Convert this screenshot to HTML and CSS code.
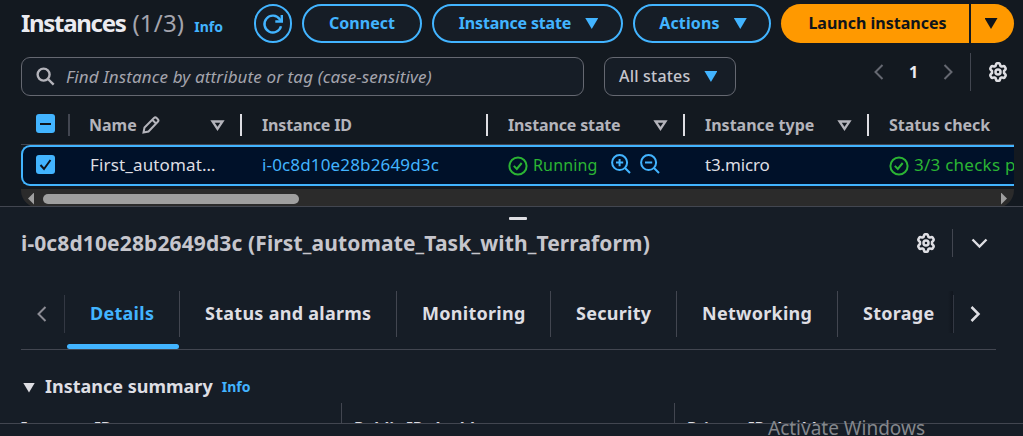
FILE: index.html
```html
<!DOCTYPE html>
<html lang="en">
<head>
<meta charset="utf-8">
<title>Instances</title>
<link rel="stylesheet" href="styles.css">
</head>
<body>
<svg class="defs" aria-hidden="true">
  <symbol id="gear" viewBox="0 0 20 20"><path d="M8 2.400Q8.300 1.200 9.300 1.200h1.400Q11.700 1.200 12 2.400L12.400 3.900L13.600 4.600L15.100 4.200Q16.200 3.900 16.800 4.800L17.500 6Q18 7 17.200 7.800L16 9V11L17.200 12.200Q18 13 17.500 14L16.800 15.200Q16.200 16.100 15.100 15.800L13.600 15.400L12.400 16.100L12 17.600Q11.700 18.800 10.700 18.800H9.300Q8.300 18.800 8 17.600L7.600 16.100L6.400 15.400L4.900 15.800Q3.800 16.100 3.200 15.200L2.500 14Q2 13 2.800 12.200L4 11V9L2.800 7.800Q2 7 2.500 6L3.200 4.800Q3.800 3.900 4.900 4.200L6.400 4.600L7.600 3.900Z"/><circle cx="10" cy="10" r="2.500"/></symbol>
  <symbol id="check" viewBox="0 0 20 20"><circle cx="10" cy="10" r="8.600"/><path d="M5.800 9.900l3 3.100 4.900-6"/></symbol>
</svg>
<main class="list">
  <header class="bar">
    <h1 class="title"><span class="word">Instances</span><span class="count">(1/3)</span></h1>
    <a class="info">Info</a>
    <div class="actions">
      <button class="btn round"><svg class="refresh" viewBox="0 0 20 20"><path d="M18 12.200A8.400 8.400 0 1 1 16.800 5.300L18.600 7"/><path d="M18.800 1v6.500h-6.500"/></svg></button>
      <button class="btn connect"><span>Connect</span></button>
      <button class="btn state"><span>Instance state</span><i class="tri"></i></button>
      <button class="btn act"><span>Actions</span><i class="tri"></i></button>
      <div class="split"><button class="launch"><span>Launch instances</span></button><button class="more"><i class="tri"></i></button></div>
    </div>
  </header>
  <div class="filters">
    <div class="search"><svg class="mag" viewBox="0 0 20 20"><circle cx="8" cy="8" r="6.300"/><path d="M12.600 12.600l6 6"/></svg><span>Find Instance by attribute or tag (case-sensitive)</span></div>
    <div class="select"><span>All states</span><i class="tri"></i></div>
    <div class="pager">
      <svg class="chev" viewBox="0 0 10 16"><path d="M8.500 1L1.500 8l7 7"/></svg>
      <b>1</b>
      <svg class="chev" viewBox="0 0 10 16"><path d="M1.500 1l7 7-7 7"/></svg>
    </div>
    <div class="prefs"><svg class="gear"><use href="#gear"/></svg></div>
  </div>
  <div class="table">
    <div class="row head">
      <div class="cell pick"><span class="box"><svg viewBox="0 0 19 19"><path d="M4 10h11"/></svg></span></div>
      <div class="cell"><span class="h-name">Name</span><svg class="pencil" viewBox="0 0 18 18"><path d="M1.500 16.500l1-5L12 2q1.300-1.200 2.600 0l1.200 1.200q1.300 1.300 0 2.600L6.500 15.500zM10.500 4l3.500 3.500"/></svg><svg class="sort" viewBox="0 0 13 11"><path d="M1.500 1.500h10l-5 7.500z"/></svg></div>
      <div class="cell"><span class="h-id">Instance ID</span></div>
      <div class="cell"><span class="h-state">Instance state</span><svg class="sort" viewBox="0 0 13 11"><path d="M1.500 1.500h10l-5 7.500z"/></svg></div>
      <div class="cell"><span class="h-type">Instance type</span><svg class="sort" viewBox="0 0 13 11"><path d="M1.500 1.500h10l-5 7.500z"/></svg></div>
      <div class="cell last"><span class="h-check">Status check</span></div>
    </div>
    <div class="row data">
      <div class="cell pick"><span class="box"><svg viewBox="0 0 19 19"><path d="M4.500 10l3.500 4 6.500-9"/></svg></span></div>
      <div class="cell"><span class="d-name">First_automat…</span></div>
      <div class="cell"><a class="d-id">i-0c8d10e28b2649d3c</a></div>
      <div class="cell ok"><svg class="check"><use href="#check"/></svg><span class="d-run">Running</span>
        <svg class="zoom" viewBox="0 0 20 20"><circle cx="8.600" cy="8.600" r="7.500"/><path d="M14 14l5 5M5 8.600h7.200M8.600 5v7.200"/></svg>
        <svg class="zoom out" viewBox="0 0 20 20"><circle cx="8.600" cy="8.600" r="7.500"/><path d="M14 14l5 5M5 8.600h7.200"/></svg>
      </div>
      <div class="cell"><span class="d-type">t3.micro</span></div>
      <div class="cell ok"><svg class="check"><use href="#check"/></svg><span class="d-check">3/3 checks passed</span></div>
    </div>
    <div class="scroll"><i class="left"></i><i class="thumb"></i><i class="right"></i></div>
  </div>
</main>
<section class="panel">
  <i class="grip"></i>
  <div class="panel-head">
    <h2 class="name">i-0c8d10e28b2649d3c (First_automate_Task_with_Terraform)</h2>
    <svg class="gear"><use href="#gear"/></svg>
    <div class="fold"><svg viewBox="0 0 17 11"><path d="M1.500 1.500l7 7 7-7"/></svg></div>
  </div>
  <nav class="tabs">
    <div class="prev"><svg class="chev" viewBox="0 0 10 16"><path d="M8.500 1L1.500 8l7 7"/></svg></div>
    <div class="tab t1 active"><span>Details</span></div>
    <div class="tab t2"><span>Status and alarms</span></div>
    <div class="tab t3"><span>Monitoring</span></div>
    <div class="tab t4"><span>Security</span></div>
    <div class="tab t5"><span>Networking</span></div>
    <div class="tab t6"><span>Storage</span></div>
    <div class="next"><svg class="chev" viewBox="0 0 10 16"><path d="M1.500 1l7 7-7 7"/></svg></div>
  </nav>
  <div class="summary"><i class="tri"></i><h3>Instance summary</h3><a class="info">Info</a></div>
  <div class="fields"><div><span>Instance ID</span></div><div><span>Public IPv4 address</span></div><div><span>Private IPv4 addresses</span></div></div>
  <div class="notice">Activate Windows</div>
</section>
</body>
</html>
```

FILE: styles.css
```css
* { box-sizing: border-box; }
body { margin: 0; width: 1023px; height: 436px; overflow: hidden; background: #131920; color: #c6c6cd; font: 16px/20px "Noto Sans", "Open Sans", sans-serif; }
h1, h2, h3 { margin: 0; }
span, a, h1, h2, h3 { white-space: nowrap; }
svg { display: block; flex: none; fill: none; stroke: currentColor; stroke-width: 2; overflow: visible; }
.defs { width: 0; height: 0; position: absolute; }
.list { height: 206px; padding: 4px 9px 0 21px; }
.bar { display: flex; height: 39px; align-items: center; }
.title { display: flex; gap: 7px; font-size: 24px; line-height: 30px; margin-top: -2px; color: #ebebf0; }
.word { letter-spacing: -1.3px; }
.count { font-weight: 400; color: #a4a4ad; letter-spacing: .2px; }
.info { color: #42b4ff; font-size: 14px; font-weight: 700; }
.bar .info { margin: 7px 0 0 10px; }
.actions { margin-left: auto; display: flex; gap: 10px; }
.btn { height: 39px; padding: 0; border: 2px solid #42b4ff; border-radius: 20px; background: #161d26; color: #42b4ff; font: 700 16px/20px "Noto Sans", sans-serif; display: flex; align-items: center; justify-content: center; gap: 14px; }
.btn span, .launch span { margin-top: -1px; }
.round { width: 38px; }
.refresh { width: 20px; height: 20px; stroke-width: 2.4; }
.connect { width: 120px; }
.state { width: 191px; padding-left: 2px; letter-spacing: -.15px; }
.act { width: 138px; padding-left: 2px; letter-spacing: .15px; }
.tri { width: 13px; height: 11px; background: currentColor; clip-path: polygon(0 0, 100% 0, 50% 100%); flex: none; }
.split { display: flex; gap: 2px; }
.launch, .more { height: 39px; padding: 0; border: 0; background: #ff9900; color: #0f141a; font: 700 16px/20px "Noto Sans", sans-serif; display: flex; align-items: center; justify-content: center; }
.launch { width: 188px; border-radius: 20px 0 0 20px; padding-left: 5px; }
.more { width: 43px; border-radius: 0 20px 20px 0; padding-right: 3px; }
.filters { display: flex; margin-top: 14px; height: 39px; }
.search, .select { border: 1px solid #656871; border-radius: 9px; background: #161d26; display: flex; align-items: center; }
.search { width: 563px; padding-left: 14px; color: #a4a4ad; font-size: 17px; font-style: italic; letter-spacing: .12px; }
.mag { width: 19px; height: 19px; margin-right: 11px; color: #b4b4bb; stroke-width: 2.500; }
.select { width: 132px; margin-left: 20px; padding-left: 14px; gap: 14px; font-weight: 500; letter-spacing: .2px; }
.select .tri { color: #42b4ff; }
.select span { margin-top: -1px; }
.pager { display: flex; align-items: center; margin-left: 138px; height: 30px; color: #656871; gap: 25px; }
.pager b { color: #ebebf0; }
.chev { width: 10px; height: 16px; }
.prefs { margin: -4px 0 0 17px; height: 38px; border-left: 1px solid #424650; padding: 9px 0 0 17px; color: #dedee3; }
.gear { width: 20px; height: 20px; stroke-width: 2.500; stroke-linejoin: round; }
.table { width: 993px; margin-top: 11px; overflow: hidden; }
.row { display: grid; grid-template-columns: 49px 172px 246px 197px 184px 1fr; }
.head { height: 38px; border-bottom: 1px solid #424650; font-weight: 700; color: #b4b4bb; }
.cell { display: flex; align-items: center; min-width: 0; padding-left: 20px; }
.head .cell { height: 22px; margin-top: 7px; border-right: 2px solid #dedee3; }
.head .cell.pick { padding: 0 0 3px 15px; border-color: #424650; }
.head .last { border: 0; }
.h-name { margin-left: -1px; }
.h-id, .h-state { letter-spacing: -.15px; }
.box { width: 19px; height: 19px; border-radius: 3px; background: #42b4ff; color: #0f141a; }
.pencil { width: 18px; height: 18px; margin-left: 5px; stroke-width: 2; }
.sort { width: 13px; height: 11px; margin: 0 16px 0 auto; stroke-width: 2.300; }
.data { height: 41px; border: 2px solid #42b4ff; border-right: 0; border-radius: 9px 0 0 9px; background: #001129; color: #dedee3; }
.data .cell:not(.pick) { padding-left: 18px; }
.d-name, .d-id, .d-run, .d-type, .d-check { margin-top: -2px; font-size: 17px; letter-spacing: .15px; }
.data .cell.pick { padding: 0 0 3px 13px; }
.data .cell.ok { color: #2bb534; }
.d-run { font-size: 16px; width: 64px; }
.d-type { letter-spacing: -.15px; }
.d-check { letter-spacing: .25px; }
.data a { color: #42b4ff; }
.check { width: 20px; height: 20px; margin-right: 5px; }
.zoom { width: 20px; height: 20px; color: #42b4ff; margin-left: 14px; margin-top: -4px; }
.zoom.out { margin-left: 9px; }
.scroll { height: 19px; margin-top: 3px; background: #2b2b2b; border-radius: 0 0 18px 18px; display: flex; align-items: center; padding: 0 7px; color: #9f9f9f; }
.left, .right { width: 6px; height: 12px; background: currentColor; }
.left { clip-path: polygon(100% 0, 100% 100%, 0 50%); }
.right { clip-path: polygon(0 0, 100% 50%, 0 100%); margin-left: auto; }
.thumb { width: 256px; height: 10px; border-radius: 5px; background: #9f9f9f; margin-left: 9px; }
.panel { height: 230px; border-top: 1px solid #424650; background: #161d26; position: relative; padding-left: 21px; display: flex; flex-direction: column; }
.grip { width: 18px; height: 3px; border-radius: 1px; margin: 10px 0 0 488px; background: #dedee3; flex: none; }
.panel-head { display: flex; height: 28px; margin-top: 9px; align-items: center; }
.name { font-size: 21px; letter-spacing: .12px; width: 895px; }
.panel-head .gear { color: #dedee3; }
.fold { margin-left: 16px; height: 28px; border-left: 1px solid #424650; padding: 9px 0 0 18px; color: #dedee3; }
.fold svg { width: 17px; height: 11px; stroke-width: 2.400; }
.tabs { display: flex; width: 975px; height: 59px; margin-top: 34px; border-bottom: 1px solid #424650; font-size: 18px; letter-spacing: .27px; font-weight: 700; color: #dedee3; }
.prev { width: 44px; height: 38px; margin-top: 4px; border-right: 1px solid #333843; padding: 11px 0 0 16px; color: #8c8c94; }
.next { width: 43px; height: 38px; margin-top: 4px; border-left: 1px solid #333843; padding: 11px 0 0 16px; }
.next .chev { stroke-width: 2.500; }
.tab { height: 46px; border-right: 1px solid #424650; padding: 12px 0 0 25px; }
.t1 { width: 115px; position: relative; color: #42b4ff; }
.t1::after { content: ""; position: absolute; left: 2px; top: 53px; width: 112px; height: 5px; border-radius: 3px; background: #42b4ff; }
.t2 { width: 217px; }
.t3 { width: 154px; }
.t4 { width: 126px; }
.t5 { width: 161px; }
.t6 { width: 115px; height: 42px; border: 0; background: linear-gradient(90deg, transparent, #11161e) right / 5px 100% no-repeat; }
.summary { display: flex; align-items: center; height: 30px; margin-top: 21px; padding-left: 2px; color: #dedee3; }
.summary .tri { width: 12px; height: 10px; margin-top: 3px; }
.summary h3 { font-size: 18px; margin: 0 9px 0 10px; }
.summary .info { margin-top: 2px; }
.fields { display: grid; grid-template-columns: 320px 333px 1fr; height: 21px; margin: 2px 0 0 -21px; padding-left: 21px; border-bottom: 1px solid #424650; overflow: hidden; font-weight: 700; color: #dedee3; flex: none; }
.fields div { border-left: 1px solid #424650; padding: 15px 0 0 12px; }
.fields div:first-child { border: 0; padding-left: 0; }
.notice { position: absolute; left: 768px; top: 211px; font-size: 19px; color: #84878c; white-space: nowrap; }
```
